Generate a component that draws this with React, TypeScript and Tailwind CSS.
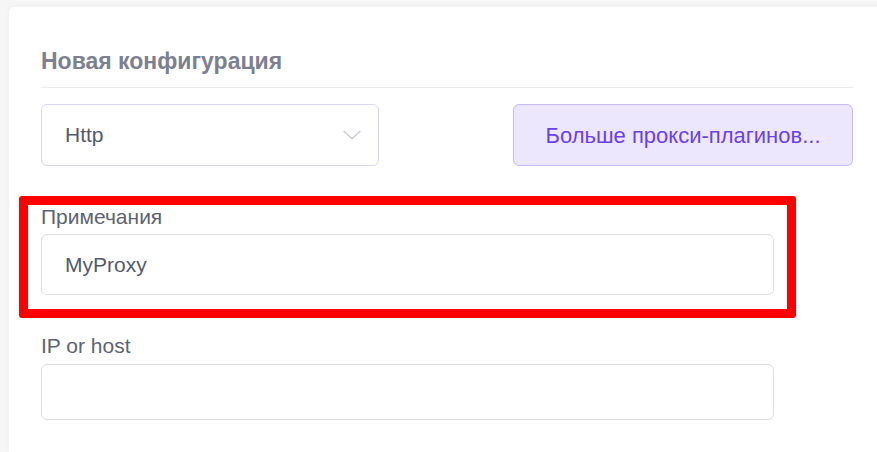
export default function App() {
  return (
    <div className="w-[877px] h-[452px] overflow-hidden bg-[#f6f6f7] pt-[7px] pl-[9px] font-['Liberation_Sans',Arial,sans-serif]">
      <div className="h-full w-[900px] rounded-tl-[5px] bg-white pl-[32px] pt-[41px] shadow-[0_0_6px_rgba(0,0,0,0.04)]">
        <div className="w-[812px]">
          {/* header */}
          <div className="border-b border-[#ebebf2] pb-[12px]">
            <h2 className="text-[23px] leading-[27px] font-bold text-[#7c808f]">Новая конфигурация</h2>
          </div>

          {/* type row */}
          <div className="mt-[16px] flex justify-between">
            <div className="flex h-[62px] w-[338px] items-center justify-between rounded-[6px] border border-[#d9d5f2] pl-[23px] pr-[17px]">
              <span className="text-[21px] text-[#535a6a]">Http</span>
              <svg width="18" height="10" viewBox="0 0 18 10" fill="none">
                <path d="M1 1.5L9 8.5L17 1.5" stroke="#c6c8d2" strokeWidth="1.4" strokeLinecap="round" strokeLinejoin="round" />
              </svg>
            </div>
            <button className="h-[62px] w-[340px] rounded-[6px] border border-[#c9b9f6] bg-[#ede7fd] text-[22px] text-[#6a3ff0]">
              Больше прокси-плагинов...
            </button>
          </div>

          {/* remarks */}
          <div className="relative mt-[39px]">
            <label className="block text-[21px] leading-[24px] text-[#5d6372]">Примечания</label>
            <div className="mt-[5px] flex h-[61px] w-[733px] items-center rounded-[6px] border border-[#dcdfe6] pl-[23px]">
              <span className="text-[21px] text-[#535a6a]">MyProxy</span>
            </div>
            <div className="pointer-events-none absolute left-[-22px] top-[-9px] h-[122px] w-[777px] rounded-[3px] border-[9px] border-[#ff0000]" />
          </div>

          {/* host */}
          <div className="mt-[39px]">
            <label className="block text-[21px] leading-[24px] text-[#5d6372]">IP or host</label>
            <div className="mt-[6px] h-[56px] w-[733px] rounded-[6px] border border-[#dcdfe6]" />
          </div>
        </div>
      </div>
    </div>
  );
}
